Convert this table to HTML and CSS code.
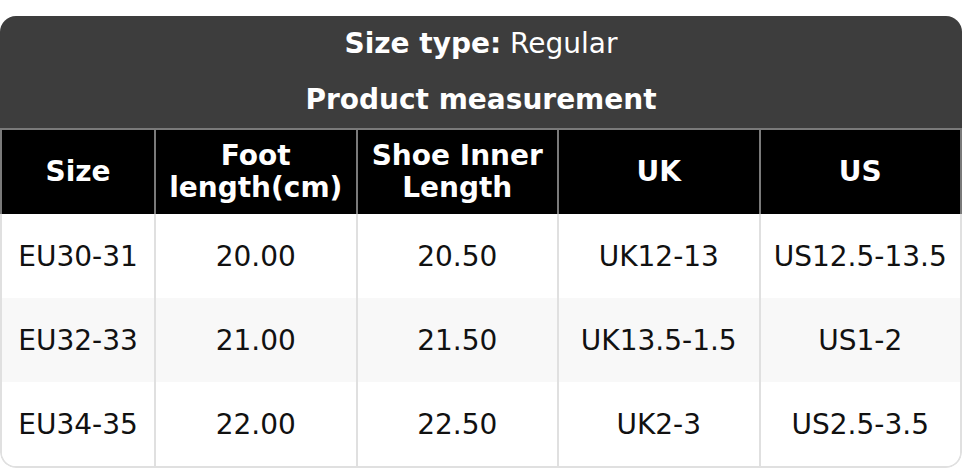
FILE: index.html
```html
<!DOCTYPE html>
<html lang="en">
<head>
<meta charset="utf-8">
<title>Size chart</title>
<link rel="stylesheet" href="styles.css">
</head>
<body>
<div class="card">
  <div class="caption">
    <div class="caption-line"><b>Size type:</b> Regular</div>
    <div class="caption-line"><b>Product measurement</b></div>
  </div>
  <div class="head">
    <div class="hcell">Size</div>
    <div class="hcell">Foot<br>length(cm)</div>
    <div class="hcell">Shoe Inner<br>Length</div>
    <div class="hcell">UK</div>
    <div class="hcell">US</div>
  </div>
  <div class="body">
    <div class="row">
      <div class="cell">EU30-31</div>
      <div class="cell">20.00</div>
      <div class="cell">20.50</div>
      <div class="cell">UK12-13</div>
      <div class="cell">US12.5-13.5</div>
    </div>
    <div class="row alt">
      <div class="cell">EU32-33</div>
      <div class="cell">21.00</div>
      <div class="cell">21.50</div>
      <div class="cell">UK13.5-1.5</div>
      <div class="cell">US1-2</div>
    </div>
    <div class="row">
      <div class="cell">EU34-35</div>
      <div class="cell">22.00</div>
      <div class="cell">22.50</div>
      <div class="cell">UK2-3</div>
      <div class="cell">US2.5-3.5</div>
    </div>
  </div>
</div>
</body>
</html>
```

FILE: styles.css
```css
html, body {
  margin: 0;
  padding: 0;
  background: #ffffff;
}

body {
  font-family: "DejaVu Sans", Verdana, sans-serif;
}

.card {
  margin-top: 16px;
  width: 962px;
  border-radius: 16px;
  overflow: hidden;
}

.caption {
  background: #3d3d3d;
  color: #ffffff;
  text-align: center;
  font-size: 28px;
}

.caption-line {
  height: 56px;
  line-height: 56px;
}

.head {
  display: grid;
  grid-template-columns: 152px repeat(4, 1fr);
  background: #000000;
  color: #ffffff;
  border-top: 2px solid #7a7a7a;
  border-left: 2px solid #7a7a7a;
  border-right: 2px solid #7a7a7a;
  height: 86px;
  box-sizing: border-box;
}

.hcell {
  display: flex;
  align-items: center;
  justify-content: center;
  text-align: center;
  font-weight: bold;
  font-size: 28px;
  line-height: 32px;
}

.hcell + .hcell {
  border-left: 2px solid #7a7a7a;
}

.body {
  border-left: 2px solid #e0e0e0;
  border-right: 2px solid #e0e0e0;
  border-bottom: 2px solid #e0e0e0;
  border-radius: 0 0 16px 16px;
  overflow: hidden;
}

.row {
  display: grid;
  grid-template-columns: 152px repeat(4, 1fr);
  height: 84px;
  background: #ffffff;
}

.row.alt {
  background: #f8f8f8;
}

.cell {
  display: flex;
  align-items: center;
  justify-content: center;
  font-size: 28px;
  color: #111111;
}

.cell + .cell {
  border-left: 2px solid #e0e0e0;
}
```
